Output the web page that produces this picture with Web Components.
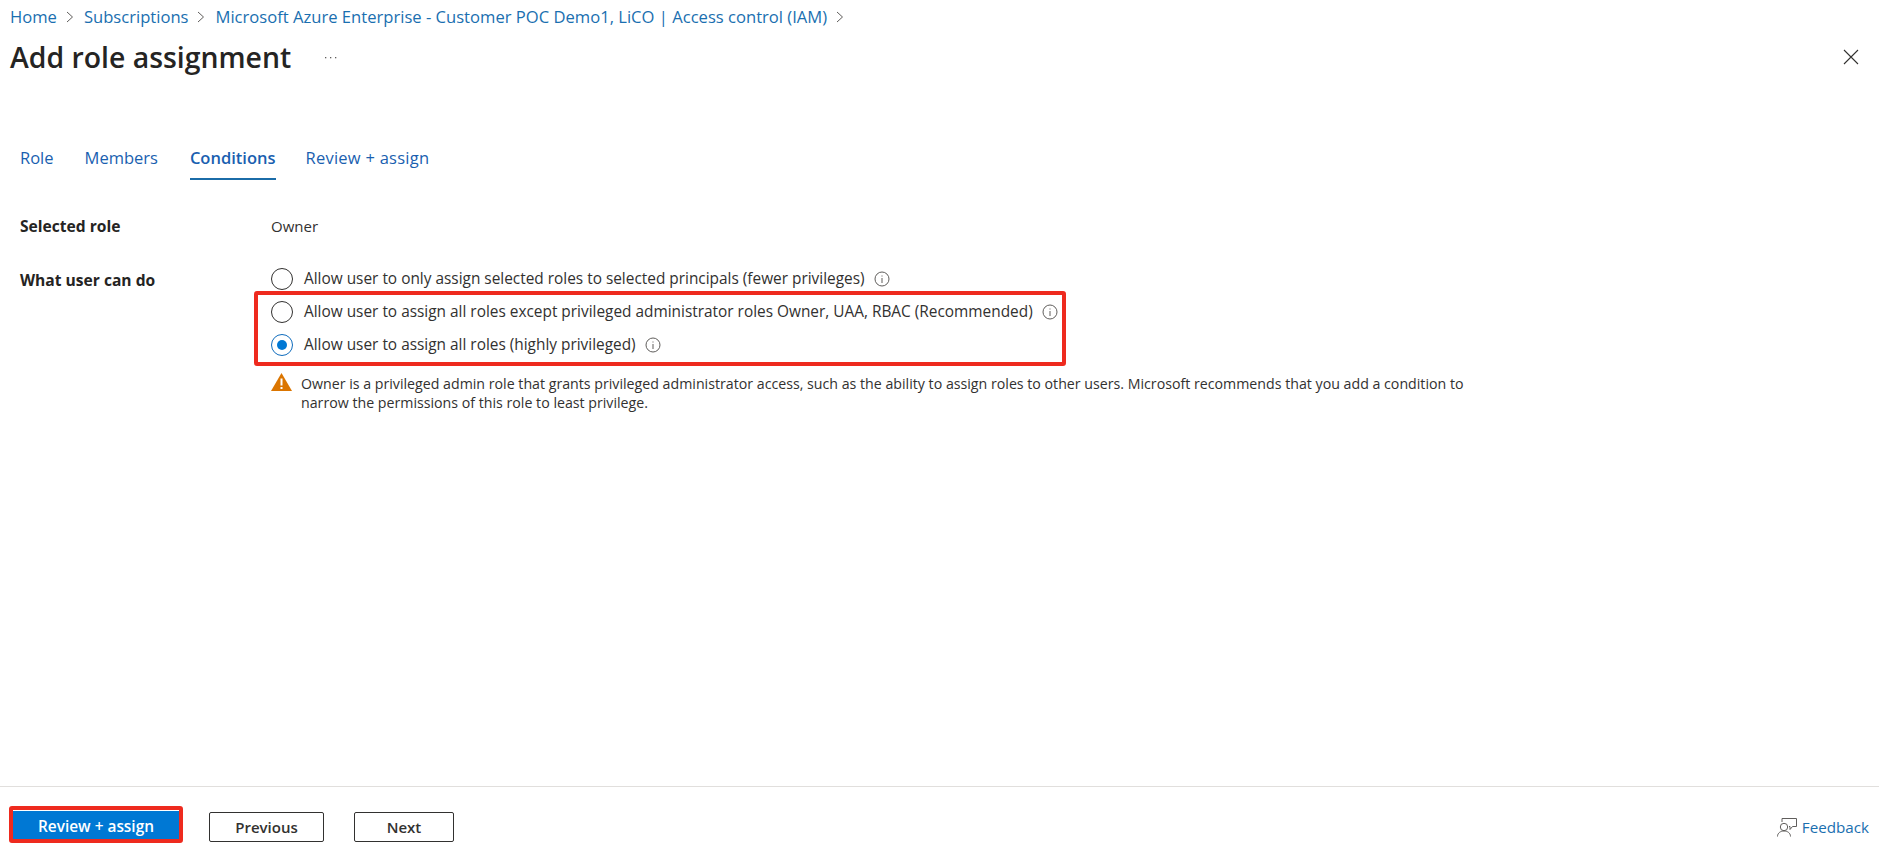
<!DOCTYPE html>
<html lang="en">
<head>
<meta charset="utf-8">
<title>Add role assignment</title>
<style>
    html, body { margin: 0; height: 100%; background: #fff; }
    body { font-family: "Open Sans", "Noto Sans", sans-serif; color: #323130; }
</style>
</head>
<body>
<role-blade>
    <az-breadcrumb slot="crumbs">
        <a>Home</a>
        <a>Subscriptions</a>
        <a>Microsoft Azure Enterprise - Customer POC Demo1, LiCO | Access control (IAM)</a>
    </az-breadcrumb>
    <blade-title slot="title">Add role assignment</blade-title>
    <az-tabs slot="tabs">
        <az-tab>Role</az-tab>
        <az-tab>Members</az-tab>
        <az-tab active style="margin-left:1px">Conditions</az-tab>
        <az-tab style="margin-left:-1px;letter-spacing:.25px">Review + assign</az-tab>
    </az-tabs>
    <form-row slot="body" label="Selected role" style="margin-top:36px">Owner</form-row>
    <form-row slot="body" label="What user can do" style="margin-top:30px;--label-top:4px">
        <az-radio style="height:25px">Allow user to only assign selected roles to selected principals (fewer privileges)</az-radio>
        <red-mark>
            <az-radio>Allow user to assign all roles except privileged administrator roles Owner, UAA, RBAC (Recommended)</az-radio>
            <az-radio checked>Allow user to assign all roles (highly privileged)</az-radio>
        </red-mark>
        <warn-note>Owner is a privileged admin role that grants privileged administrator access, such as the ability to assign roles to other users. Microsoft recommends that you add a condition to narrow the permissions of this role to least privilege.</warn-note>
    </form-row>
    <az-button slot="footer" primary marked>Review + assign</az-button>
    <az-button slot="footer" style="--w:115px;margin-left:26px">Previous</az-button>
    <az-button slot="footer" style="--w:100px;margin-left:30px">Next</az-button>
    <feedback-link slot="footer"></feedback-link>
</role-blade>

<script>
class RoleBlade extends HTMLElement {
    constructor() {
        super();
        const shadow = this.attachShadow({ mode: "open" });
        shadow.innerHTML = `
            <style>
                :host { display: flex; flex-direction: column; height: 860px; overflow: hidden; }
                header { padding: 0 10px; }
                .title-row { display: flex; align-items: center; height: 50px; }
                .more { margin-left: 32px; width: 16px; height: 16px; color: #605e5c; }
                .close { margin-left: auto; margin-right: 10px; width: 16px; height: 16px; }
                main { flex: 1; padding: 0 20px; }
                .tabs { margin-top: 59px; }
                footer { display: flex; align-items: center; height: 74px; box-sizing: border-box; border-top: 1px solid #e1dfdd; padding: 7px 10px 0 9px; }
            </style>
            <header>
                <slot name="crumbs"></slot>
                <div class="title-row">
                    <slot name="title"></slot>
                    <svg class="more" viewBox="0 0 16 16"><g fill="#605e5c"><rect x="2" y="8" width="1.3" height="1.3"/><rect x="7" y="8" width="1.3" height="1.3"/><rect x="12" y="8" width="1.3" height="1.3"/></g></svg>
                    <svg class="close" viewBox="0 0 16 16"><path d="M1 1 15 15M15 1 1 15" stroke="#323130" stroke-width="1.1" fill="none"/></svg>
                </div>
            </header>
            <main>
                <div class="tabs"><slot name="tabs"></slot></div>
                <slot name="body"></slot>
            </main>
            <footer><slot name="footer"></slot></footer>
        `;
    }
}

class AzBreadcrumb extends HTMLElement {
    constructor() {
        super();
        const shadow = this.attachShadow({ mode: "open" });
        shadow.innerHTML = `
            <style>
                :host { display: flex; align-items: center; height: 32px; padding-top: 1px; box-sizing: border-box; font-size: 16.6px; color: #0f6cbd; }
                ::slotted(a) { color: #1a6fb0; }
            </style>
            <slot></slot>
        `;
        const chevron = `<svg xmlns="http://www.w3.org/2000/svg" width="8" height="12" viewBox="0 0 8 12" style="margin:0 10px 0 9px;flex:none"><path d="M1 1 6.500 6 1 11" fill="none" stroke="#605e5c" stroke-width="1"/></svg>`;
        [...this.querySelectorAll("a")].forEach(a => a.insertAdjacentHTML("afterend", chevron));
    }
}

class BladeTitle extends HTMLElement {
    constructor() {
        super();
        this.attachShadow({ mode: "open" }).innerHTML = `
            <style>
                :host { display: block; font-size: 28.4px; font-weight: 600; color: #252423; }
            </style>
            <slot></slot>
        `;
    }
}

class AzTabs extends HTMLElement {
    constructor() {
        super();
        this.attachShadow({ mode: "open" }).innerHTML = `
            <style>
                :host { display: flex; gap: 31px; }
            </style>
            <slot></slot>
        `;
    }
}

class AzTab extends HTMLElement {
    constructor() {
        super();
        this.attachShadow({ mode: "open" }).innerHTML = `
            <style>
                :host { display: block; height: 39px; line-height: 34px; font-size: 16.5px; color: #1a5fb0; box-sizing: border-box; }
                :host([active]) { font-weight: 600; border-bottom: 2px solid #1b6ca8; color: #1a5fb0; }
            </style>
            <slot></slot>
        `;
    }
}

class FormRow extends HTMLElement {
    constructor() {
        super();
        const label = this.getAttribute("label");
        this.attachShadow({ mode: "open" }).innerHTML = `
            <style>
                :host { display: grid; grid-template-columns: 251px 1fr; font-size: 15px; margin-top: 26px; }
                .label { font-size: 15.6px; font-weight: 700; color: #252423; line-height: 20px; padding-top: var(--label-top, 0); }
                .value { line-height: 20px; }
            </style>
            <div class="label">${label}</div>
            <div class="value"><slot></slot></div>
        `;
    }
}

class AzRadio extends HTMLElement {
    constructor() {
        super();
        this.attachShadow({ mode: "open" }).innerHTML = `
            <style>
                :host { display: flex; align-items: center; height: 33px; font-size: 15.4px; color: #323130; }
                .dot { flex: none; width: 22px; height: 22px; border-radius: 50%; border: 1px solid #323130; box-sizing: border-box; margin-right: 11px; display: flex; align-items: center; justify-content: center; }
                :host([checked]) .dot { border-color: #0f6cbd; }
                :host([checked]) .dot::after { content: ""; width: 10px; height: 10px; border-radius: 50%; background: #0078d4; }
                info-icon { margin-left: 9px; }
            </style>
            <span class="dot"></span>
            <span><slot></slot></span>
            <info-icon></info-icon>
        `;
    }
}

class InfoIcon extends HTMLElement {
    constructor() {
        super();
        this.attachShadow({ mode: "open" }).innerHTML = `
            <style>
                :host { display: inline-flex; width: 16px; height: 16px; }
            </style>
            <svg width="16" height="16" viewBox="0 0 16 16"><circle cx="8" cy="8" r="7" fill="none" stroke="#605e5c"/><rect x="7.500" y="7" width="1" height="5" fill="#605e5c"/><rect x="7.500" y="4.500" width="1" height="1" fill="#605e5c"/></svg>
        `;
    }
}

class RedMark extends HTMLElement {
    constructor() {
        super();
        this.attachShadow({ mode: "open" }).innerHTML = `
            <style>
                :host { display: block; width: 812px; box-sizing: border-box; border: 4px solid #ee2a1e; border-radius: 3px; margin-left: -17px; padding: 0 0 1px 13px; }
            </style>
            <slot></slot>
        `;
    }
}

class WarnNote extends HTMLElement {
    constructor() {
        super();
        this.attachShadow({ mode: "open" }).innerHTML = `
            <style>
                :host { display: flex; gap: 9px; width: 1200px; margin-top: 8px; font-size: 14.2px; line-height: 19px; color: #323130; }
                svg { flex: none; margin-top: -1px; }
            </style>
            <svg width="21" height="18" viewBox="0 0 21 18"><path d="M10.500 0 21 18H0Z" fill="#db7500"/><rect x="9.500" y="5.500" width="2" height="7" fill="#fff"/><rect x="9.500" y="14" width="2" height="2" fill="#fff"/></svg>
            <span><slot></slot></span>
        `;
    }
}

class AzButton extends HTMLElement {
    constructor() {
        super();
        this.attachShadow({ mode: "open" }).innerHTML = `
            <style>
                :host { display: block; width: var(--w, 100px); height: 30px; box-sizing: border-box; border: 1px solid #323130; border-radius: 2px; font-size: 15px; font-weight: 600; color: #323130; text-align: center; line-height: 28px; }
                :host([primary]) { background: #0078d4; color: #fff; border: 0; line-height: 30px; font-size: 15.4px; }
                :host([marked]) { width: 174px; height: 37px; margin-bottom: 5px; border: 4px solid #ee2a1e; border-radius: 3px; line-height: 34px; box-shadow: inset 0 1px 0 #fff; }
            </style>
            <slot></slot>
        `;
    }
}

class FeedbackLink extends HTMLElement {
    constructor() {
        super();
        this.attachShadow({ mode: "open" }).innerHTML = `
            <style>
                :host { display: flex; align-items: center; gap: 5px; margin-left: auto; font-size: 15.2px; color: #1a6fb0; }
            </style>
            <svg width="20" height="19" viewBox="0 0 20 19" fill="none" stroke="#605e5c" stroke-width="1"><path d="M5 4V.5H19.500V8.500H15.500L13 11.500V8.500H12"/><circle cx="7" cy="9" r="3.700"/><path d="M.5 18.500C.5 15 3.500 13 7 13S13.500 15 13.500 18.500"/></svg>
            <span>Feedback</span>
        `;
    }
}

customElements.define("role-blade", RoleBlade);
customElements.define("az-breadcrumb", AzBreadcrumb);
customElements.define("blade-title", BladeTitle);
customElements.define("az-tabs", AzTabs);
customElements.define("az-tab", AzTab);
customElements.define("form-row", FormRow);
customElements.define("az-radio", AzRadio);
customElements.define("info-icon", InfoIcon);
customElements.define("red-mark", RedMark);
customElements.define("warn-note", WarnNote);
customElements.define("az-button", AzButton);
customElements.define("feedback-link", FeedbackLink);
</script>
</body>
</html>
